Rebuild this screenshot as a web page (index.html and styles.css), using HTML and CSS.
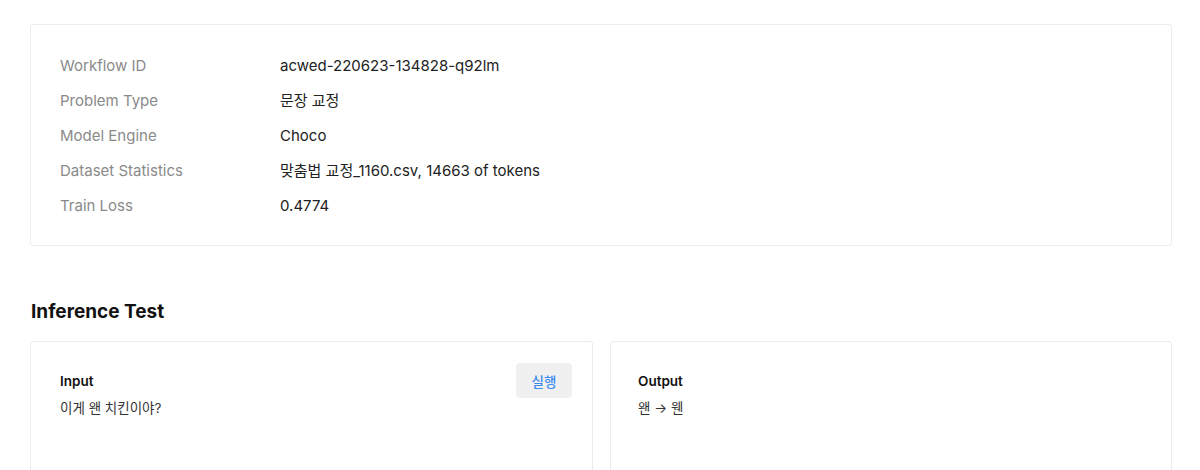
FILE: index.html
```html
<!DOCTYPE html>
<html lang="ko">
<head>
<meta charset="utf-8">
<link rel="stylesheet" href="styles.css">
</head>
<body>
<main class="page">
  <section class="card info">
    <dl class="info-grid">
      <dt>Workflow ID</dt><dd>acwed-220623-134828-q92lm</dd>
      <dt>Problem Type</dt><dd>문장 교정</dd>
      <dt>Model Engine</dt><dd>Choco</dd>
      <dt>Dataset Statistics</dt><dd>맞춤법 교정_1160.csv, 14663 of tokens</dd>
      <dt>Train Loss</dt><dd>0.4774</dd>
    </dl>
  </section>

  <h2 class="section-title">Inference Test</h2>

  <section class="test-grid">
    <div class="card panel">
      <div class="panel-head">
        <h3 class="panel-title">Input</h3>
        <button class="run-btn" type="button">실행</button>
      </div>
      <p class="panel-text">이게 왠 치킨이야?</p>
    </div>
    <div class="card panel panel-out">
      <div class="panel-head">
        <h3 class="panel-title">Output</h3>
      </div>
      <p class="panel-text">왠 → 웬</p>
    </div>
  </section>
</main>
</body>
</html>
```

FILE: styles.css
```css
* { box-sizing: border-box; }

html, body {
  margin: 0;
  padding: 0;
  background: #ffffff;
}

body {
  font-family: "Inter", "Noto Sans CJK KR", sans-serif;
  color: #222222;
}

.page {
  padding: 24px 28px 0 30px;
}

.card {
  border: 1px solid #ececec;
  border-radius: 3px;
  background: #ffffff;
}

.info {
  padding: 31px 29px 29px 29px;
}

.info-grid {
  margin: 0;
  display: grid;
  grid-template-columns: 220px 1fr;
  row-gap: 15px;
  font-size: 15px;
  line-height: 20px;
}

.info-grid dt {
  color: #8a8a8a;
}

.info-grid dd {
  margin: 0;
  color: #222222;
}

.section-title {
  margin: 54px 0 17px 1px;
  font-size: 19px;
  line-height: 24px;
  font-weight: 700;
  color: #111111;
}

.test-grid {
  display: grid;
  grid-template-columns: 563px 1fr;
  gap: 17px;
}

.panel {
  min-height: 160px;
  padding: 21px 20px 20px 29px;
}

.panel-out {
  padding-left: 27px;
}

.panel-head {
  display: flex;
  align-items: center;
  justify-content: space-between;
  min-height: 35px;
}

.panel-title {
  margin: 0;
  font-size: 13.5px;
  line-height: 18px;
  font-weight: 600;
  color: #111111;
}

.run-btn {
  width: 56px;
  height: 35px;
  border: none;
  border-radius: 4px;
  background: #f0f0f0;
  color: #3b8cf0;
  font-family: "Inter", "Noto Sans CJK KR", sans-serif;
  font-size: 13.5px;
  font-weight: 500;
  padding: 0;
  cursor: pointer;
}

.panel-text {
  margin: 1px 0 0 0;
  font-size: 13.5px;
  line-height: 18px;
  color: #333333;
}
```
